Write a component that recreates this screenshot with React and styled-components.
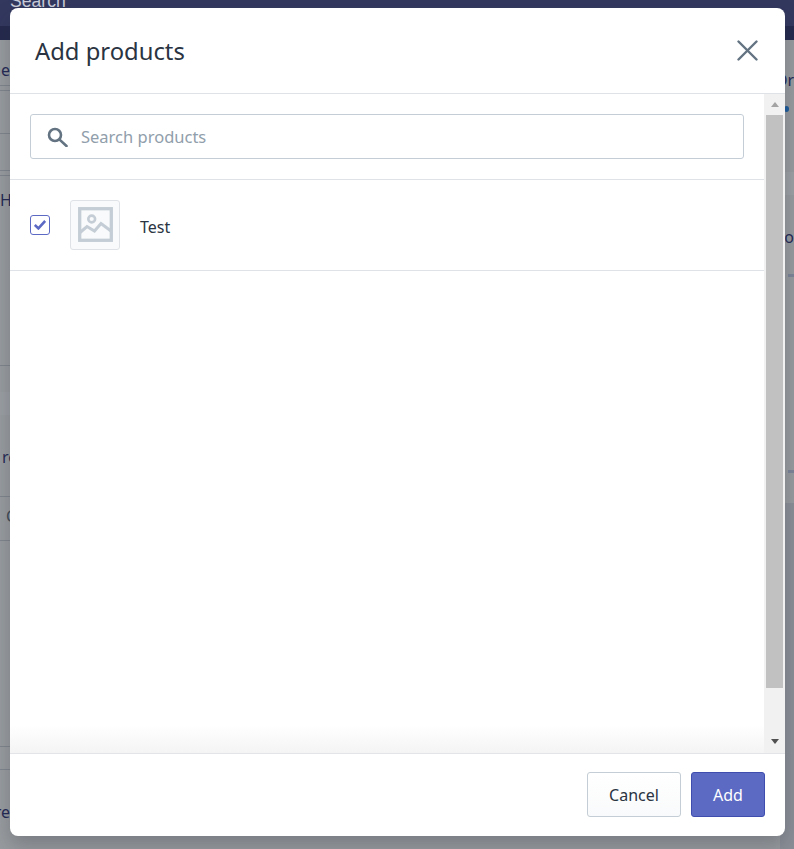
import React from 'react'
import styled, { createGlobalStyle } from 'styled-components'

const leftRows = [
  { h: 46, line: true, text: 'Queue', pb: 5 },
  { h: 5, line: true },
  { h: 43, line: true },
  { h: 37, line: true },
  { h: 5, line: true },
  { h: 190, line: true, text: 'H', pb: 155, start: true },
  { h: 26 },
  { h: 23, box: true },
  { h: 82, line: true, text: 're', pb: 29, start: true, indent: 2 },
  { h: 44, line: true, text: 'C', pb: 14, muted: true, indent: 6, start: true },
  { h: 206, line: true },
  { h: 23, line: true },
  { h: 60, text: 'Store', pb: 8 },
]

const GlobalStyle = createGlobalStyle`
  html, body {
    margin: 0;
    padding: 0;
    height: 100%;
    overflow: hidden;
    background: #989c9f;
  }
  * { box-sizing: border-box; }
  body {
    font-family: "Noto Sans", "Open Sans", sans-serif;
    color: #212b36;
  }
`

const Page = styled.div`
  position: relative;
  width: 794px;
  height: 849px;
  overflow: hidden;
  display: flex;
  flex-direction: column;
`

const TopBar = styled.div`
  height: 26px;
  flex: none;
  background: #33385f;
  color: #c9ccd9;
  padding-left: 10px;
  font-family: "Liberation Sans", sans-serif;
  font-size: 17.6px;
  line-height: 20px;
  overflow: hidden;
`

const SearchLabel = styled.div`
  margin-top: -9px;
`

const SubBar = styled.div`
  height: 14px;
  flex: none;
  background: #252a4d;
`

const Behind = styled.div`
  flex: 1;
  display: flex;
  justify-content: space-between;
`

const LeftCol = styled.div`
  width: 10px;
  display: flex;
  flex-direction: column;
`

const Row = styled.div`
  height: ${p => p.$h}px;
  flex: none;
  display: flex;
  justify-content: ${p => (p.$start ? 'flex-start' : 'flex-end')};
  align-items: flex-end;
  padding-bottom: ${p => p.$pb || 0}px;
  padding-left: ${p => p.$indent || 0}px;
  overflow: hidden;
  white-space: nowrap;
  font-size: 16px;
  line-height: 20px;
  color: ${p => (p.$muted ? '#414c57' : '#252a55')};
  border-bottom: ${p => (p.$line ? '1px solid #80868d' : 'none')};
  background: ${p => (p.$box ? '#9b9fa3' : 'transparent')};
`

const RightCol = styled.div`
  width: 14px;
  display: flex;
  flex-direction: column;
`

const RightRow = styled.div`
  height: ${p => p.$h}px;
  flex: ${p => (p.$fill ? 1 : 'none')};
  font-size: 16px;
  line-height: 20px;
  white-space: nowrap;
  overflow: hidden;
  color: #252a55;
  background: ${p => p.$bg || 'transparent'};
  display: flex;
  align-items: flex-end;
  justify-content: ${p => (p.$end ? 'flex-end' : 'flex-start')};
`

const Dot = styled.span`
  width: 5px;
  height: 6px;
  margin-left: 4px;
  border-radius: 50%;
  background: #1d5c9c;
`

const Dash = styled.span`
  width: 6px;
  height: 3px;
  background: #7d8598;
`

const Modal = styled.div`
  position: absolute;
  left: 10px;
  top: 8px;
  width: 775px;
  height: 828px;
  background: #fff;
  border-radius: 8px;
  overflow: hidden;
  display: flex;
  flex-direction: column;
  box-shadow: 0 10px 20px rgba(30, 34, 50, 0.25);
`

const Header = styled.header`
  height: 86px;
  flex: none;
  display: flex;
  align-items: center;
  justify-content: space-between;
  padding: 0 27px 0 25px;
  border-bottom: 1px solid #dfe3e8;
`

const Title = styled.h2`
  margin: 0;
  font-size: 23.8px;
  font-weight: 400;
  color: #2a3442;
`

const CloseButton = styled.button`
  width: 21px;
  height: 21px;
  padding: 0;
  border: none;
  background: none;
  display: flex;
`

const Body = styled.div`
  flex: 1;
  display: flex;
  min-height: 0;
`

const Content = styled.div`
  width: 754px;
  flex: none;
  display: flex;
  flex-direction: column;
`

const SearchSection = styled.div`
  padding: 20px;
  border-bottom: 1px solid #dfe3e8;
`

const SearchBox = styled.label`
  height: 45px;
  display: flex;
  align-items: center;
  gap: 13px;
  padding-left: 16px;
  border: 1px solid #c4cdd5;
  border-radius: 3px;
`

const SearchInput = styled.input`
  flex: 1;
  border: none;
  outline: none;
  padding: 0;
  font: inherit;
  font-size: 16.5px;
  color: #212b36;
  &::placeholder {
    color: #919eab;
    opacity: 1;
  }
`

const ProductRow = styled.div`
  height: 91px;
  flex: none;
  display: flex;
  align-items: center;
  gap: 20px;
  padding: 0 20px;
  border-bottom: 1px solid #dfe3e8;
`

const Check = styled.span`
  width: 20px;
  height: 20px;
  margin-top: -1px;
  border: 1px solid #5c6ac4;
  border-radius: 3px;
  background: #fff;
  display: flex;
  align-items: center;
  justify-content: center;
`

const Thumb = styled.div`
  width: 50px;
  height: 50px;
  margin-top: -1px;
  border: 1px solid #dfe3e8;
  border-radius: 3px;
  background: #f9fafb;
  display: flex;
  align-items: center;
  justify-content: center;
`

const ProductName = styled.span`
  padding-top: 4px;
  font-size: 16px;
  color: #2a3442;
`

const Fade = styled.div`
  margin-top: auto;
  height: 28px;
  background: linear-gradient(to bottom, #fff, #f4f4f4);
`

const Scrollbar = styled.div`
  flex: 1;
  background: #f1f1f1;
  display: flex;
  flex-direction: column;
  padding: 0 2px 1px;
`

const ArrowCell = styled.div`
  height: 21px;
  flex: none;
  display: flex;
  align-items: center;
  justify-content: center;
  margin-top: ${p => (p.$down ? 'auto' : '0')};
`

const Arrow = styled.span`
  width: 0;
  height: 0;
  border-left: 4.5px solid transparent;
  border-right: 4.5px solid transparent;
  border-bottom: ${p => (p.$down ? 'none' : '5px solid #a3a3a3')};
  border-top: ${p => (p.$down ? '5px solid #505050' : 'none')};
`

const Thumbbar = styled.div`
  height: 573px;
  flex: none;
  background: #c1c1c1;
`

const Footer = styled.footer`
  height: 83px;
  flex: none;
  display: flex;
  justify-content: flex-end;
  gap: 10px;
  padding: 18px 20px 0 0;
  border-top: 1px solid #e3e4e7;
`

const Button = styled.button`
  width: ${p => (p.$primary ? 74 : 94)}px;
  height: 45px;
  padding: 0;
  border-radius: 3px;
  font: inherit;
  font-size: 16px;
  border: 1px solid ${p => (p.$primary ? '#3f4eae' : '#c4cdd5')};
  background: ${p => (p.$primary ? '#5c6ac4' : 'linear-gradient(to bottom, #fff, #f9fafb)')};
  color: ${p => (p.$primary ? '#fff' : '#2a3442')};
`

export default function App() {
  return (
    <>
      <GlobalStyle />
      <Page>
        <TopBar><SearchLabel>Search</SearchLabel></TopBar>
        <SubBar />
        <Behind>
          <LeftCol>
            {leftRows.map((r, i) => (
              <Row key={i} $h={r.h} $pb={r.pb} $line={r.line} $box={r.box} $muted={r.muted} $start={r.start} $indent={r.indent}>
                {r.text}
              </Row>
            ))}
          </LeftCol>
          <RightCol>
            <RightRow $h={50} $end>Or</RightRow>
            <RightRow $h={16} />
            <RightRow $h={6}><Dot /></RightRow>
            <RightRow $h={60} />
            <RightRow $h={23} $bg="#9da1a5" />
            <RightRow $h={52} $end>Co</RightRow>
            <RightRow $h={30} $end><Dash /></RightRow>
            <RightRow $h={196} $end><Dash /></RightRow>
            <RightRow $h={30} />
            <RightRow $fill $bg="#8b8f97" />
          </RightCol>
        </Behind>
        <Modal>
          <Header>
            <Title>Add products</Title>
            <CloseButton aria-label="Close">
              <svg width="21" height="21" viewBox="0 0 21 21">
                <path d="M1.5 1.5 L19.5 19.5 M19.5 1.5 L1.5 19.5" stroke="#637381" strokeWidth="2.4" strokeLinecap="round" />
              </svg>
            </CloseButton>
          </Header>
          <Body>
            <Content>
              <SearchSection>
                <SearchBox>
                  <svg width="21" height="20" viewBox="0 0 21 20">
                    <circle cx="8" cy="8" r="6" fill="none" stroke="#637381" strokeWidth="2.6" />
                    <path d="M12.6 12.6 L19.5 19" stroke="#637381" strokeWidth="2.6" strokeLinecap="round" />
                  </svg>
                  <SearchInput placeholder="Search products" />
                </SearchBox>
              </SearchSection>
              <ProductRow>
                <Check>
                  <svg width="12" height="10" viewBox="0 0 12 10">
                    <path d="M0.8 5 L4.4 8.4 L11.2 1" fill="none" stroke="#5c6ac4" strokeWidth="2.6" />
                  </svg>
                </Check>
                <Thumb>
                  <svg width="35" height="35" viewBox="0 0 35 35">
                    <rect x="1.7" y="1.7" width="31.6" height="31.6" fill="none" stroke="#c4cdd5" strokeWidth="3.3" />
                    <circle cx="13.7" cy="12" r="3.4" fill="none" stroke="#c4cdd5" strokeWidth="2.6" />
                    <path d="M2 25.5 L9 19.5 L16.5 24 L23 16.5 L33 24" fill="none" stroke="#c4cdd5" strokeWidth="3" />
                  </svg>
                </Thumb>
                <ProductName>Test</ProductName>
              </ProductRow>
              <Fade />
            </Content>
            <Scrollbar>
              <ArrowCell><Arrow /></ArrowCell>
              <Thumbbar />
              <ArrowCell $down><Arrow $down /></ArrowCell>
            </Scrollbar>
          </Body>
          <Footer>
            <Button>Cancel</Button>
            <Button $primary>Add</Button>
          </Footer>
        </Modal>
      </Page>
    </>
  )
}
